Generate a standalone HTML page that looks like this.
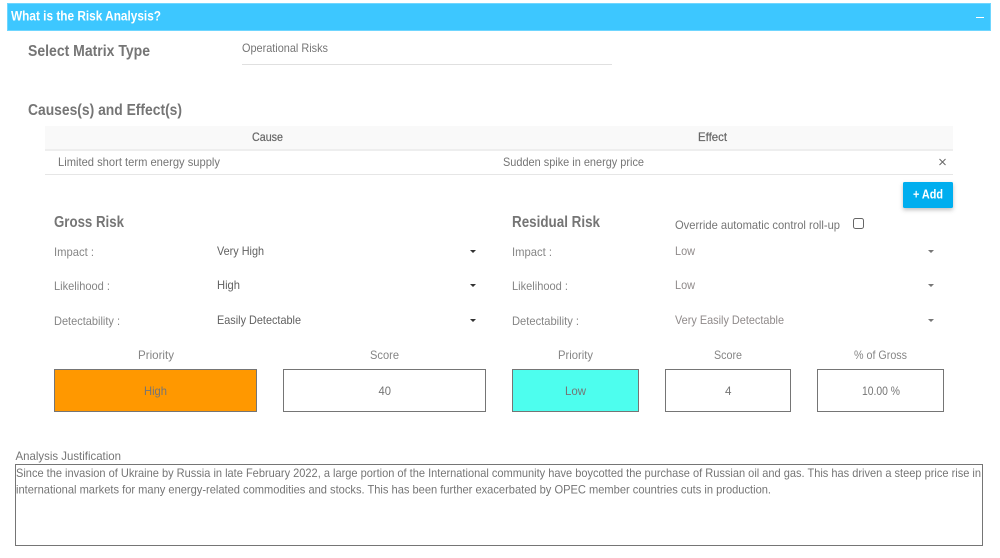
<!DOCTYPE html>
<html>
<head>
<meta charset="utf-8">
<style>
html,body{margin:0;padding:0;background:#fff;width:1000px;height:558px;overflow:hidden}
svg{display:block;font-family:"Liberation Sans",sans-serif;filter:blur(.3px)}
.h{font-weight:bold;font-size:15.5px;fill:#757575}
.t{font-size:12px;fill:#757575}
.d{font-size:12px;fill:#616161}
.l{font-size:12px;fill:#858585}
.r{font-size:12px;fill:#8f8a8a}
</style>
</head>
<body>
<svg width="1000" height="558" viewBox="0 0 1000 558" xmlns="http://www.w3.org/2000/svg">
<defs><filter id="s" x="-20%" y="-20%" width="140%" height="160%"><feDropShadow dx="0" dy="2" stdDeviation="2" flood-color="#000" flood-opacity=".25"/></filter></defs>

<rect x="7" y="3" width="984" height="28" fill="#3dc7ff"/>
<rect x="7.5" y="3.5" width="983" height="27" fill="none" stroke="#6fd6ff"/>
<text x="11" y="20.500" font-size="13.500" font-weight="bold" fill="#fff" textLength="150" lengthAdjust="spacingAndGlyphs">What is the Risk Analysis?</text>
<rect x="976" y="17" width="8" height="1" fill="#fff"/>

<text x="28" y="56" class="h" textLength="122" lengthAdjust="spacingAndGlyphs">Select Matrix Type</text>
<text x="242" y="52" class="t" textLength="86" lengthAdjust="spacingAndGlyphs">Operational Risks</text>
<rect x="242" y="64" width="370" height="1" fill="#e0e0e0"/>

<text x="28" y="115" class="h" textLength="154" lengthAdjust="spacingAndGlyphs">Causes(s) and Effect(s)</text>
<rect x="45" y="126" width="908" height="24" fill="#f9f9f9"/>
<rect x="45" y="149" width="908" height="2" fill="#eeeeee"/>
<text x="252" y="141" font-size="12" fill="#666" stroke="#666" stroke-width=".2" textLength="31" lengthAdjust="spacingAndGlyphs">Cause</text>
<text x="698" y="141" font-size="12" fill="#666" stroke="#666" stroke-width=".2" textLength="29" lengthAdjust="spacingAndGlyphs">Effect</text>
<text x="58" y="166" class="t" textLength="162" lengthAdjust="spacingAndGlyphs">Limited short term energy supply</text>
<text x="503" y="166" class="t" textLength="141" lengthAdjust="spacingAndGlyphs">Sudden spike in energy price</text>
<path d="M939.500 159L945.500 165M945.500 159L939.500 165" stroke="#666" stroke-width="1" fill="none"/>
<rect x="45" y="174" width="908" height="1" fill="#e6e6e6"/>

<rect x="903" y="182" width="50" height="26" rx="1.500" fill="#00aeef" filter="url(#s)"/>
<text x="913" y="198.500" font-size="12.500" font-weight="bold" fill="#fff" textLength="30" lengthAdjust="spacingAndGlyphs">+ Add</text>

<text x="54" y="227" class="h" textLength="70" lengthAdjust="spacingAndGlyphs">Gross Risk</text>
<text x="54" y="256" class="l" textLength="40" lengthAdjust="spacingAndGlyphs">Impact :</text>
<text x="54" y="290" class="l" textLength="56" lengthAdjust="spacingAndGlyphs">Likelihood :</text>
<text x="54" y="325" class="l" textLength="66" lengthAdjust="spacingAndGlyphs">Detectability :</text>
<text x="217" y="255" class="d" textLength="47" lengthAdjust="spacingAndGlyphs">Very High</text>
<text x="217" y="289" class="d" textLength="23" lengthAdjust="spacingAndGlyphs">High</text>
<text x="217" y="324" class="d" textLength="84" lengthAdjust="spacingAndGlyphs">Easily Detectable</text>
<path d="M470 250h6l-3 3zM470 284h6l-3 3zM470 319h6l-3 3z" fill="#333"/>

<text x="512" y="227" class="h" textLength="88" lengthAdjust="spacingAndGlyphs">Residual Risk</text>
<text x="675" y="229" class="t" textLength="165" lengthAdjust="spacingAndGlyphs">Override automatic control roll-up</text>
<rect x="853.500" y="218.500" width="10" height="10" rx="2" fill="#fff" stroke="#666"/>
<text x="512" y="256" class="l" textLength="40" lengthAdjust="spacingAndGlyphs">Impact :</text>
<text x="512" y="290" class="l" textLength="56" lengthAdjust="spacingAndGlyphs">Likelihood :</text>
<text x="512" y="325" class="l" textLength="67" lengthAdjust="spacingAndGlyphs">Detectability :</text>
<text x="675" y="255" class="r" textLength="20" lengthAdjust="spacingAndGlyphs">Low</text>
<text x="675" y="289" class="r" textLength="20" lengthAdjust="spacingAndGlyphs">Low</text>
<text x="675" y="324" class="r" textLength="109" lengthAdjust="spacingAndGlyphs">Very Easily Detectable</text>
<path d="M928 250h6l-3 3zM928 284h6l-3 3zM928 319h6l-3 3z" fill="#777"/>

<text x="138" y="359" class="l" textLength="36" lengthAdjust="spacingAndGlyphs">Priority</text>
<text x="370" y="359" class="l" textLength="29" lengthAdjust="spacingAndGlyphs">Score</text>
<text x="558" y="359" class="l" textLength="35" lengthAdjust="spacingAndGlyphs">Priority</text>
<text x="714" y="359" class="l" textLength="28" lengthAdjust="spacingAndGlyphs">Score</text>
<text x="854" y="359" class="l" textLength="53" lengthAdjust="spacingAndGlyphs">% of Gross</text>

<rect x="54.500" y="369.500" width="202" height="42" fill="#ff9800" stroke="#757575"/>
<rect x="283.500" y="369.500" width="202" height="42" fill="#fff" stroke="#757575"/>
<rect x="512.500" y="369.500" width="126" height="42" fill="#4dfeee" stroke="#757575"/>
<rect x="665.500" y="369.500" width="125" height="42" fill="#fff" stroke="#757575"/>
<rect x="817.500" y="369.500" width="126" height="42" fill="#fff" stroke="#757575"/>
<text x="144" y="395" class="t" textLength="23" lengthAdjust="spacingAndGlyphs">High</text>
<text x="378.500" y="395" class="t" textLength="12.500" lengthAdjust="spacingAndGlyphs">40</text>
<text x="565" y="395" class="t" textLength="21" lengthAdjust="spacingAndGlyphs">Low</text>
<text x="725" y="395" class="t" textLength="6.500" lengthAdjust="spacingAndGlyphs">4</text>
<text x="862" y="395" class="t" textLength="38" lengthAdjust="spacingAndGlyphs">10.00 %</text>

<text x="15.500" y="460" class="t" textLength="105.500" lengthAdjust="spacingAndGlyphs">Analysis Justification</text>
<rect x="15.500" y="464.500" width="967" height="81" fill="#fff" stroke="#757575"/>
<text x="16" y="477" class="t" textLength="965" lengthAdjust="spacingAndGlyphs">Since the invasion of Ukraine by Russia in late February 2022, a large portion of the International community have boycotted the purchase of Russian oil and gas. This has driven a steep price rise in</text>
<text x="16" y="493.500" class="t" textLength="755" lengthAdjust="spacingAndGlyphs">international markets for many energy-related commodities and stocks. This has been further exacerbated by OPEC member countries cuts in production.</text>
</svg>
</body>
</html>
